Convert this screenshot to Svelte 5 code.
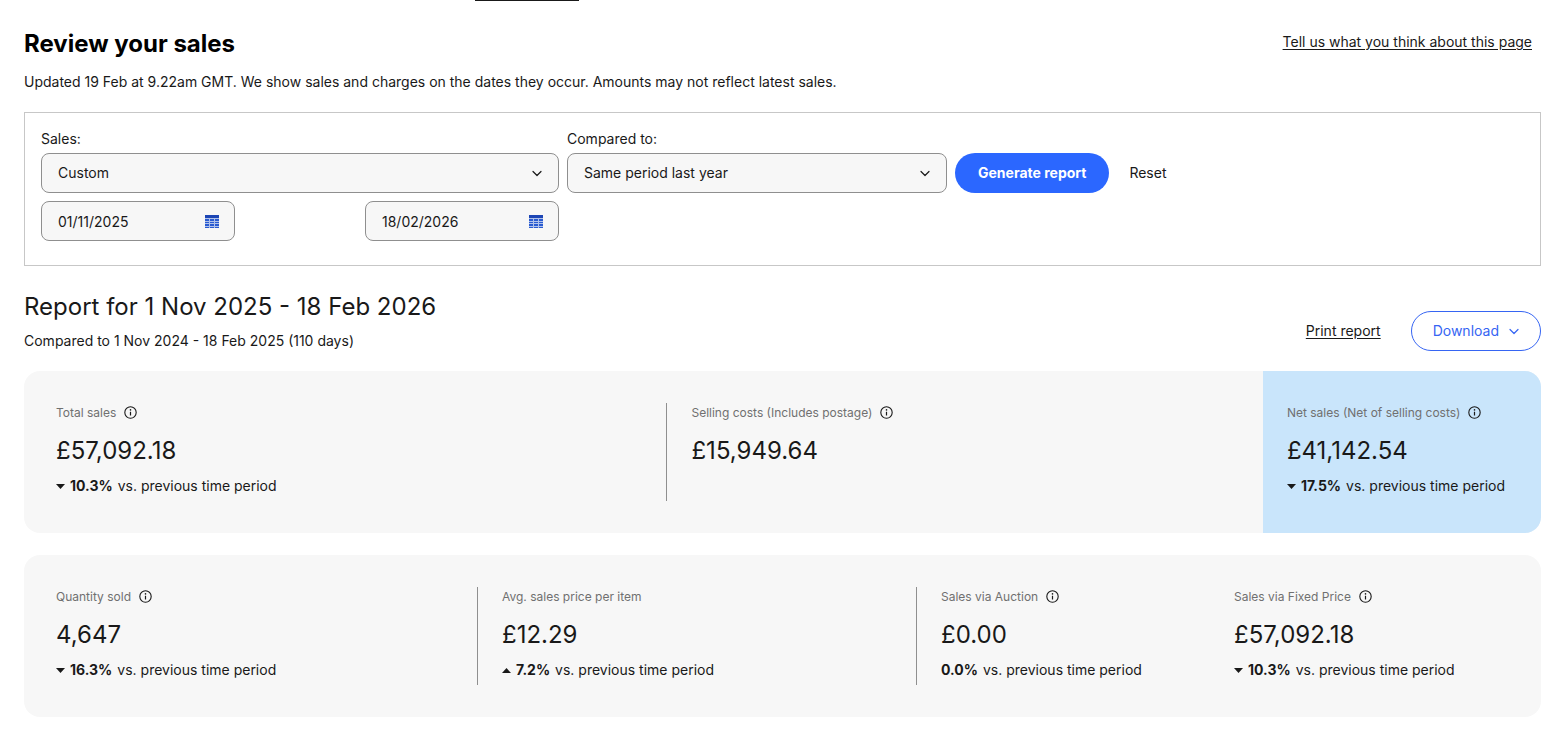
<script lang="ts">
  type Metric = {
    label: string;
    value: string;
    info?: boolean;
    change?: string;
    trend?: 'up' | 'down';
    divided?: boolean;
  };

  const totals: Metric[] = [
    { label: 'Total sales', value: '£57,092.18', info: true, change: '10.3%', trend: 'down' },
    { label: 'Selling costs (Includes postage)', value: '£15,949.64', info: true, divided: true },
  ];

  const net: Metric = {
    label: 'Net sales (Net of selling costs)',
    value: '£41,142.54',
    info: true,
    change: '17.5%',
    trend: 'down',
  };

  const breakdown: Metric[] = [
    { label: 'Quantity sold', value: '4,647', info: true, change: '16.3%', trend: 'down' },
    { label: 'Avg. sales price per item', value: '£12.29', change: '7.2%', trend: 'up', divided: true },
    { label: 'Sales via Auction', value: '£0.00', info: true, change: '0.0%', divided: true },
    { label: 'Sales via Fixed Price', value: '£57,092.18', info: true, change: '10.3%', trend: 'down' },
  ];

  let range = $state('Custom');
  let comparison = $state('Same period last year');
  let from = $state('01/11/2025');
  let to = $state('18/02/2026');

  function reset() {
    range = 'Custom';
    comparison = 'Same period last year';
    from = '01/11/2025';
    to = '18/02/2026';
  }
</script>

{#snippet chevron()}
  <svg class="chevron" viewBox="0 0 10 10" width="10" height="10" aria-hidden="true">
    <path d="M1 3.500l4 4 4-4" fill="none" stroke="currentColor" stroke-width="1.200" stroke-linecap="round" stroke-linejoin="round" />
  </svg>
{/snippet}

{#snippet calendar()}
  <svg viewBox="0 0 14 14" width="14" height="14" aria-hidden="true">
    <path d="M0 1h14v3H0z" fill="#1d45b4" />
    <path d="M0 4h14v10H0z" fill="#2a5bd0" opacity="0.35" />
    {#each [5, 8, 10, 13] as y}
      {#each [0, 5, 10] as x}
        <rect {x} {y} width="4" height={y === 5 || y === 10 ? 2 : 1} fill="#2a5bd0" />
      {/each}
    {/each}
  </svg>
{/snippet}

{#snippet metric(m: Metric)}
  <div class="metric" class:divided={m.divided}>
    <div class="metric-label">
      <span>{m.label}</span>
      {#if m.info}
        <button class="info" type="button" aria-label="About {m.label}">
          <svg viewBox="0 0 13 13" width="13" height="13" aria-hidden="true">
            <circle cx="6.500" cy="6.500" r="5.700" fill="none" stroke="currentColor" stroke-width="1.100" />
            <path d="M6.500 5.700v3.700" stroke="currentColor" stroke-width="1.200" />
            <circle cx="6.500" cy="3.900" r="0.800" fill="currentColor" />
          </svg>
        </button>
      {/if}
    </div>
    <div class="metric-value">{m.value}</div>
    {#if m.change}
      <div class="metric-change">
        {#if m.trend}
          <svg class="trend" viewBox="0 0 9 5" width="9" height="5" role="img" aria-label={m.trend}>
            <path d={m.trend === 'down' ? 'M0 0h9L4.500 5z' : 'M0 5h9L4.500 0z'} fill="currentColor" />
          </svg>
        {/if}
        <b>{m.change}</b>
        <span>vs. previous time period</span>
      </div>
    {/if}
  </div>
{/snippet}

<div class="tab-marker"></div>

<main>
  <header class="page-head">
    <h1>Review your sales</h1>
    <a class="feedback" href="#feedback">Tell us what you think about this page</a>
  </header>
  <p class="updated">
    Updated 19 Feb at 9.22am GMT. We show sales and charges on the dates they occur. Amounts may not reflect latest sales.
  </p>

  <form class="filters" onsubmit={(e) => e.preventDefault()}>
    <div class="field sales">
      <label for="range">Sales:</label>
      <div class="select">
        <select id="range" bind:value={range}>
          <option>Custom</option>
          <option>Last 31 days</option>
          <option>Last 90 days</option>
        </select>
        {@render chevron()}
      </div>
      <div class="dates">
        <div class="date">
          <input type="text" aria-label="Start date" bind:value={from} />
          <button type="button" aria-label="Open start date calendar">{@render calendar()}</button>
        </div>
        <div class="date">
          <input type="text" aria-label="End date" bind:value={to} />
          <button type="button" aria-label="Open end date calendar">{@render calendar()}</button>
        </div>
      </div>
    </div>
    <div class="field compare">
      <label for="comparison">Compared to:</label>
      <div class="select">
        <select id="comparison" bind:value={comparison}>
          <option>Same period last year</option>
          <option>Previous period</option>
        </select>
        {@render chevron()}
      </div>
    </div>
    <div class="actions">
      <button class="primary" type="submit">Generate report</button>
      <button class="reset" type="button" onclick={reset}>Reset</button>
    </div>
  </form>

  <section class="report-head">
    <div>
      <h2>Report for 1 Nov 2025 - 18 Feb 2026</h2>
      <p>Compared to 1 Nov 2024 - 18 Feb 2025 (110 days)</p>
    </div>
    <div class="report-actions">
      <a href="#print">Print report</a>
      <button class="download" type="button">Download {@render chevron()}</button>
    </div>
  </section>

  <section class="card summary">
    <div class="totals">
      {#each totals as m}
        {@render metric(m)}
      {/each}
    </div>
    <div class="net">
      {@render metric(net)}
    </div>
  </section>

  <section class="card breakdown">
    {#each breakdown as m}
      {@render metric(m)}
    {/each}
  </section>
</main>

<style>
  :global(body) {
    background: #fff;
    color: #191919;
    font-family: Inter, 'Liberation Sans', sans-serif;
    font-size: 14px;
    line-height: 20px;
  }

  h1,
  h2,
  p {
    margin: 0;
  }

  button,
  input,
  select {
    font: inherit;
    color: inherit;
  }

  button {
    padding: 0;
    border: 0;
    background: none;
    cursor: pointer;
  }

  a {
    color: inherit;
    text-underline-offset: 2px;
  }

  svg {
    display: block;
  }

  /* Underline of the active tab above the page */
  .tab-marker {
    width: 104px;
    height: 1px;
    margin-left: 475px;
    background: #191919;
  }

  main {
    padding: 27px 22px 12px 24px;
  }

  .page-head {
    display: flex;
    justify-content: space-between;
    align-items: flex-start;
    padding-right: 9px;
  }

  h1 {
    font-size: 24px;
    line-height: 32px;
    font-weight: 700;
    color: #000;
  }

  .feedback {
    margin-top: 4px;
  }

  .updated {
    margin-top: 12px;
  }

  .filters {
    display: flex;
    gap: 8px;
    margin-top: 20px;
    padding: 16px 16px 24px;
    border: 1px solid #c7c7c7;
  }

  .sales {
    flex: 0 1 518px;
  }

  .compare {
    flex: 0 1 380px;
  }

  label {
    display: block;
    margin-bottom: 4px;
  }

  .select {
    position: relative;
  }

  .select .chevron {
    position: absolute;
    top: 15px;
    right: 17px;
    pointer-events: none;
  }

  select,
  input {
    box-sizing: border-box;
    width: 100%;
    height: 40px;
    padding: 0 16px;
    border: 1px solid #8f8f8f;
    border-radius: 8px;
    background: #f7f7f7;
    appearance: none;
  }

  .dates {
    display: flex;
    justify-content: space-between;
    gap: 8px;
    margin-top: 8px;
  }

  .date {
    position: relative;
    flex: 0 1 194px;
  }

  .date button {
    position: absolute;
    top: 13px;
    right: 16px;
  }

  .actions {
    display: flex;
    align-items: center;
    align-self: flex-start;
    gap: 20px;
    margin-top: 24px;
  }

  .primary {
    height: 40px;
    padding: 0 23px;
    border-radius: 20px;
    background: #2b67ff;
    color: #fff;
    font-weight: 700;
  }

  .report-head {
    display: flex;
    justify-content: space-between;
    align-items: flex-end;
    margin-top: 25px;
  }

  h2 {
    font-size: 24px;
    line-height: 32px;
    font-weight: 400;
  }

  .report-head p {
    margin-top: 8px;
  }

  .report-actions {
    display: flex;
    align-items: center;
    gap: 30px;
  }

  .download {
    display: flex;
    align-items: center;
    gap: 10px;
    height: 40px;
    padding: 0 21px;
    border: 1px solid #3665f3;
    border-radius: 20px;
    color: #3665f3;
  }

  .card {
    margin-top: 20px;
    border-radius: 16px;
    background: #f7f7f7;
    overflow: hidden;
  }

  .summary {
    display: flex;
  }

  .totals {
    display: grid;
    grid-template-columns: 610fr 596fr;
    flex: 1;
    padding: 32px 0 32px 32px;
  }

  .net {
    padding: 32px 36px 32px 24px;
    background: #c9e5fb;
  }

  .breakdown {
    display: grid;
    grid-template-columns: 421fr 439fr 318fr 275fr;
    margin-top: 22px;
    padding: 32px;
  }

  .metric {
    min-height: 98px;
  }

  .divided {
    padding-left: 24px;
    border-left: 1px solid #8f8f8f;
  }

  .metric-label {
    display: flex;
    align-items: center;
    gap: 8px;
    height: 20px;
    font-size: 12px;
    color: #707070;
  }

  .info {
    padding-bottom: 2px;
    color: #191919;
  }

  .metric-value {
    margin-top: 12px;
    font-size: 24px;
    line-height: 32px;
  }

  .metric-change {
    display: flex;
    align-items: center;
    gap: 5px;
    margin-top: 9px;
  }
</style>
